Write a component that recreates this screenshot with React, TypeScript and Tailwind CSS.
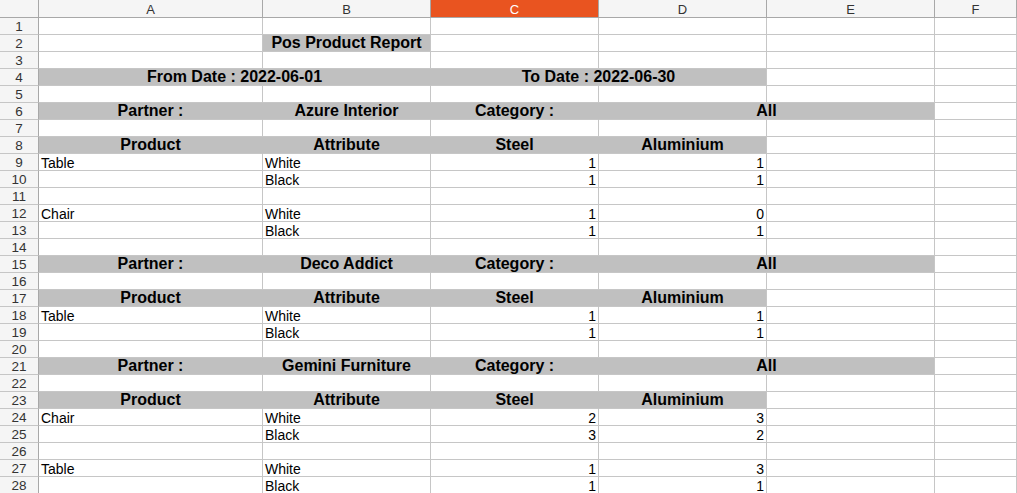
import React from 'react';

type C = { s?: number; t?: string; g?: boolean; a?: 'l' | 'c' | 'r'; b?: boolean; nr?: boolean };

const E: C = {};
const empty = (): C[] => [E, E, E, E, E, E];
const title = (): C[] => [E, { t: 'Pos Product Report', g: true, b: true, a: 'c' }, E, E, E, E];
const dates = (): C[] => [
  { s: 2, t: 'From Date : 2022-06-01', g: true, b: true, a: 'c', nr: true },
  { s: 2, t: 'To Date : 2022-06-30', g: true, b: true, a: 'c' },
  E,
  E,
];
const partner = (n: string): C[] => [
  { t: 'Partner :', g: true, b: true, a: 'c', nr: true },
  { t: n, g: true, b: true, a: 'c', nr: true },
  { t: 'Category :', g: true, b: true, a: 'c', nr: true },
  { s: 2, t: 'All', g: true, b: true, a: 'c' },
  E,
];
const header = (): C[] => [
  { t: 'Product', g: true, b: true, a: 'c', nr: true },
  { t: 'Attribute', g: true, b: true, a: 'c', nr: true },
  { t: 'Steel', g: true, b: true, a: 'c', nr: true },
  { t: 'Aluminium', g: true, b: true, a: 'c' },
  E,
  E,
];
const data = (p: string, at: string, s: string, al: string): C[] => [
  { t: p, a: 'l' },
  { t: at, a: 'l' },
  { t: s, a: 'r' },
  { t: al, a: 'r' },
  E,
  E,
];

const rows: C[][] = [
  empty(),
  title(),
  empty(),
  dates(),
  empty(),
  partner('Azure Interior'),
  empty(),
  header(),
  data('Table', 'White', '1', '1'),
  data('', 'Black', '1', '1'),
  empty(),
  data('Chair', 'White', '1', '0'),
  data('', 'Black', '1', '1'),
  empty(),
  partner('Deco Addict'),
  empty(),
  header(),
  data('Table', 'White', '1', '1'),
  data('', 'Black', '1', '1'),
  empty(),
  partner('Gemini Furniture'),
  empty(),
  header(),
  data('Chair', 'White', '2', '3'),
  data('', 'Black', '3', '2'),
  empty(),
  data('Table', 'White', '1', '3'),
  data('', 'Black', '1', '1'),
];

const spanCls: Record<number, string> = { 1: 'col-span-1', 2: 'col-span-2' };

function Cell({ c }: { c: C }) {
  const span = spanCls[c.s ?? 1];
  const bg = c.g ? 'bg-[#c0c0c0]' : 'bg-white';
  const border = c.nr ? 'border-r-[#c0c0c0]' : 'border-r-[#c6c6c6]';
  const align = c.a === 'c' ? 'justify-center' : c.a === 'r' ? 'justify-end pr-[2px]' : 'justify-start pl-[2px]';
  const font = c.b
    ? 'font-bold text-[16px] leading-[16px] pt-[0px]'
    : 'font-normal text-[14px] leading-[14px] pt-[2px]';
  return (
    <div
      className={`${span} ${bg} ${border} h-[17px] border-r border-b border-b-[#c6c6c6] flex items-start overflow-visible whitespace-nowrap text-black ${align}`}
    >
      {c.t ? <span className={font}>{c.t}</span> : null}
    </div>
  );
}

export default function App() {
  const letters = ['A', 'B', 'C', 'D', 'E', 'F'];
  return (
    <div
      className="w-[1017px] h-[493px] overflow-hidden bg-white"
      style={{ fontFamily: '"Liberation Sans", Arial, sans-serif' }}
    >
      <div className="grid grid-cols-[39px_224px_168px_168px_168px_168px_1fr]">
        <div className="h-[18px] bg-[#f5f5f5] border-r border-b border-[#a8a8a8]" />
        {letters.map((l) =>
          l === 'C' ? (
            <div
              key={l}
              className="h-[18px] bg-[#e95420] border-r border-b border-r-[#a8a8a8] border-b-[#a8a8a8] flex items-center justify-center text-white text-[13px] leading-[13px] pt-[1px]"
            >
              {l}
            </div>
          ) : (
            <div
              key={l}
              className="h-[18px] bg-[#f5f5f5] border-r border-b border-[#a8a8a8] flex items-center justify-center text-[#333333] text-[13px] leading-[13px] pt-[1px]"
            >
              {l}
            </div>
          )
        )}
        {rows.map((r, i) => (
          <React.Fragment key={i}>
            <div className="h-[17px] bg-[#f5f5f5] border-r border-r-[#a8a8a8] border-b border-b-[#c6c6c6] flex items-start justify-center text-[#333333] text-[13.5px] leading-[14px] pt-[2px]">
              {i + 1}
            </div>
            {r.map((c, j) => (
              <Cell key={j} c={c} />
            ))}
          </React.Fragment>
        ))}
      </div>
    </div>
  );
}
